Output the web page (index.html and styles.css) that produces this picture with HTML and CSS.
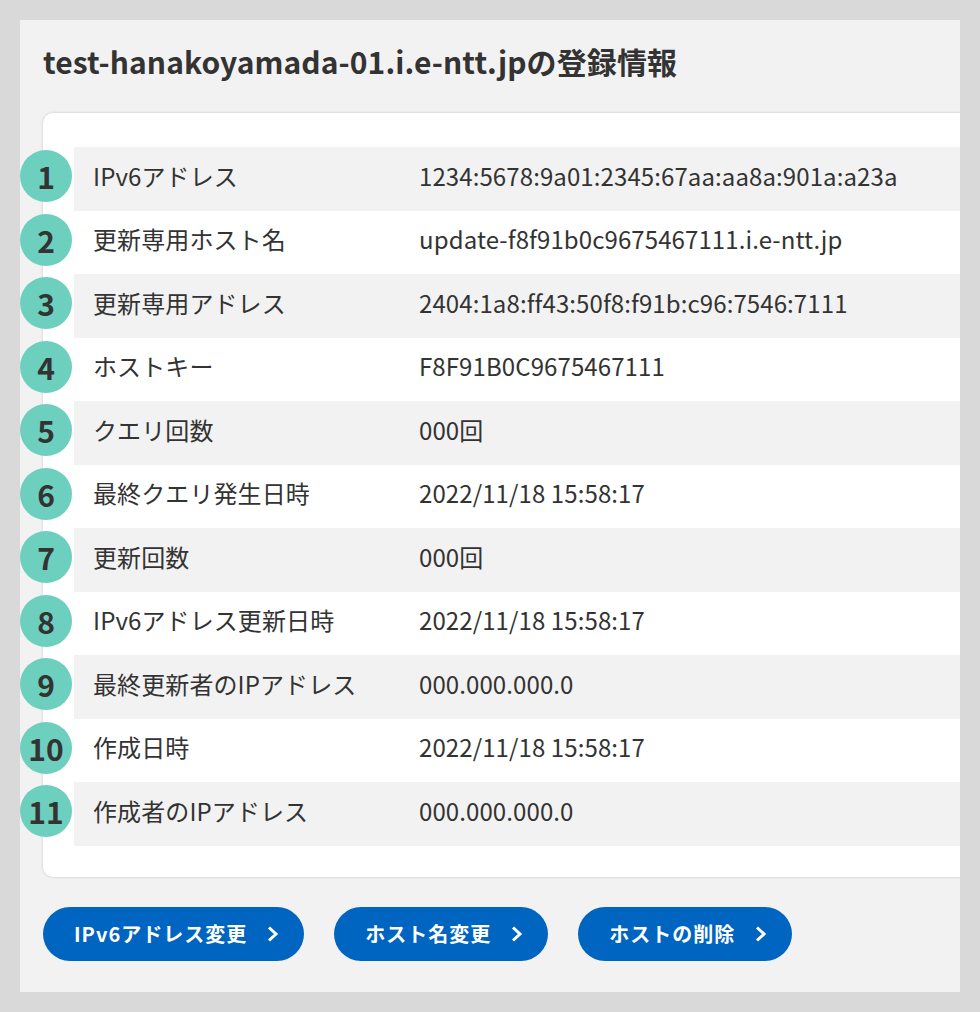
FILE: index.html
```html
<!DOCTYPE html>
<html lang="ja">
<head>
  <meta charset="UTF-8" />
  <meta name="viewport" content="width=device-width, initial-scale=1.0"/>
  <title>登録情報</title>
  <link rel="stylesheet" href="styles.css">
</head>
<body>
  <div class="panel">
    <h1 class="title">test-hanakoyamada-01.i.e-ntt.jpの登録情報</h1>

    <div class="card">
      <ol class="info-list">
        <li class="info-row">
          <span class="num">1</span>
          <div class="info-body"><span class="info-label">IPv6アドレス</span><span class="info-value">1234:5678:9a01:2345:67aa:aa8a:901a:a23a</span></div>
        </li>
        <li class="info-row">
          <span class="num">2</span>
          <div class="info-body"><span class="info-label">更新専用ホスト名</span><span class="info-value">update-f8f91b0c9675467111.i.e-ntt.jp</span></div>
        </li>
        <li class="info-row">
          <span class="num">3</span>
          <div class="info-body"><span class="info-label">更新専用アドレス</span><span class="info-value">2404:1a8:ff43:50f8:f91b:c96:7546:7111</span></div>
        </li>
        <li class="info-row">
          <span class="num">4</span>
          <div class="info-body"><span class="info-label">ホストキー</span><span class="info-value">F8F91B0C9675467111</span></div>
        </li>
        <li class="info-row">
          <span class="num">5</span>
          <div class="info-body"><span class="info-label">クエリ回数</span><span class="info-value">000回</span></div>
        </li>
        <li class="info-row">
          <span class="num">6</span>
          <div class="info-body"><span class="info-label">最終クエリ発生日時</span><span class="info-value">2022/11/18 15:58:17</span></div>
        </li>
        <li class="info-row">
          <span class="num">7</span>
          <div class="info-body"><span class="info-label">更新回数</span><span class="info-value">000回</span></div>
        </li>
        <li class="info-row">
          <span class="num">8</span>
          <div class="info-body"><span class="info-label">IPv6アドレス更新日時</span><span class="info-value">2022/11/18 15:58:17</span></div>
        </li>
        <li class="info-row">
          <span class="num">9</span>
          <div class="info-body"><span class="info-label">最終更新者のIPアドレス</span><span class="info-value">000.000.000.0</span></div>
        </li>
        <li class="info-row">
          <span class="num">10</span>
          <div class="info-body"><span class="info-label">作成日時</span><span class="info-value">2022/11/18 15:58:17</span></div>
        </li>
        <li class="info-row">
          <span class="num">11</span>
          <div class="info-body"><span class="info-label">作成者のIPアドレス</span><span class="info-value">000.000.000.0</span></div>
        </li>
      </ol>
    </div>

    <div class="actions">
      <a class="btn" href="#">IPv6アドレス変更
        <svg class="chev" width="12" height="16" viewBox="0 0 12 16"><polyline points="2,1.5 9,8 2,14.5" /></svg>
      </a>
      <a class="btn" href="#">ホスト名変更
        <svg class="chev" width="12" height="16" viewBox="0 0 12 16"><polyline points="2,1.5 9,8 2,14.5" /></svg>
      </a>
      <a class="btn" href="#">ホストの削除
        <svg class="chev" width="12" height="16" viewBox="0 0 12 16"><polyline points="2,1.5 9,8 2,14.5" /></svg>
      </a>
    </div>
  </div>
</body>
</html>
```

FILE: styles.css
```css
* {
  box-sizing: border-box;
}

body {
  margin: 0;
  padding: 20px;
  background: #d9d9d9;
  font-family: "Noto Sans CJK JP", "Noto Sans", sans-serif;
  color: #333;
}

.panel {
  width: 940px;
  height: 972px;
  background: #f2f2f2;
  padding: 20px 0 0 23px;
  overflow: hidden;
}

.title {
  margin: 0 0 31px;
  font-size: 30px;
  line-height: 42px;
  font-weight: 700;
  letter-spacing: 0.1px;
}

/* カード */
.card {
  width: 960px;
  background: #fff;
  border-radius: 10px;
  box-shadow: 0 0 3px rgba(0, 0, 0, 0.18);
  padding: 34px 0 31px;
}

.info-list {
  list-style: none;
  margin: 0 0 0 -23px;
  padding: 0;
}

.info-row {
  display: flex;
  align-items: flex-start;
  gap: 2px;
  height: 63.5px;
}

.info-row:nth-child(odd) .info-body {
  background: #f2f2f2;
}

.num {
  flex: none;
  width: 52px;
  height: 52px;
  margin-top: 3px;
  border-radius: 50%;
  background: #6dcfbd;
  display: flex;
  align-items: center;
  justify-content: center;
  font-size: 30px;
  font-weight: 700;
  color: #333;
}

.info-body {
  flex: 1;
  height: 100%;
  display: flex;
  align-items: center;
  padding: 0 0 7px 19px;
  font-size: 24px;
  letter-spacing: 0.1px;
}

.info-label {
  width: 326px;
  flex: none;
}

/* ボタン */
.actions {
  display: flex;
  gap: 30px;
  margin-top: 30px;
}

.btn {
  display: inline-flex;
  align-items: center;
  gap: 20px;
  height: 54px;
  padding: 0 25px 0 31px;
  border-radius: 27px;
  background: #0064c1;
  color: #fff;
  font-size: 20px;
  font-weight: 700;
  letter-spacing: 0.05em;
  text-decoration: none;
}

.chev {
  fill: none;
  stroke: #fff;
  stroke-width: 3;
}
```
